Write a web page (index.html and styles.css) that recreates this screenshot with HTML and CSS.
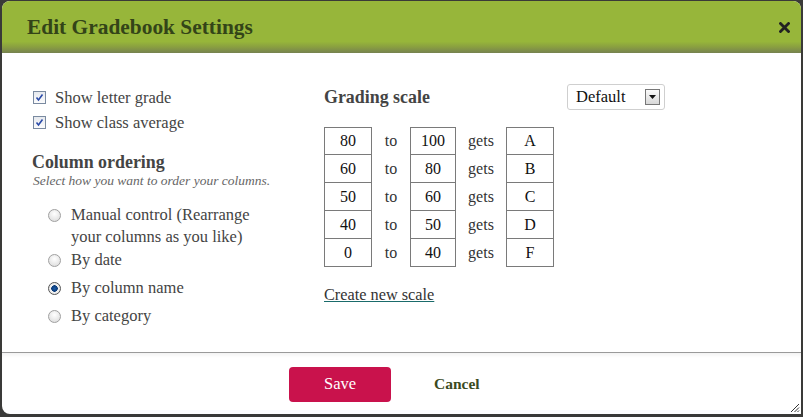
FILE: index.html
```html
<!DOCTYPE html>
<html>
<head>
<meta charset="utf-8">
<link rel="stylesheet" href="styles.css">
</head>
<body>
<div class="dialog">
  <div class="header">
    <h1 class="title">Edit Gradebook Settings</h1>
    <svg class="close" width="11" height="11" viewBox="0 0 11 11"><path d="M1.5 1.5 L9.5 9.5 M9.5 1.5 L1.5 9.5" stroke="#222" stroke-width="2.8" stroke-linecap="square"/></svg>
  </div>
  <div class="content">
    <div class="left">
      <div class="check-row"><span class="checkbox"><svg width="9" height="9" viewBox="0 0 9 9"><path d="M1.5 4.5 L3.5 7 L7.5 1.5" fill="none" stroke="#2a4aa8" stroke-width="1.6"/></svg></span><span>Show letter grade</span></div>
      <div class="check-row"><span class="checkbox"><svg width="9" height="9" viewBox="0 0 9 9"><path d="M1.5 4.5 L3.5 7 L7.5 1.5" fill="none" stroke="#2a4aa8" stroke-width="1.6"/></svg></span><span>Show class average</span></div>
      <h2 class="section-title">Column ordering</h2>
      <p class="hint">Select how you want to order your columns.</p>
      <div class="radio-list">
        <div class="radio-row first"><span class="radio"></span><span class="radio-label">Manual control (Rearrange<br>your columns as you like)</span></div>
        <div class="radio-row"><span class="radio"></span><span class="radio-label">By date</span></div>
        <div class="radio-row"><span class="radio selected"></span><span class="radio-label">By column name</span></div>
        <div class="radio-row"><span class="radio"></span><span class="radio-label">By category</span></div>
      </div>
    </div>
    <div class="right">
      <div class="scale-head">
        <h2 class="section-title">Grading scale</h2>
        <div class="select"><span>Default</span><span class="select-btn"><svg width="7" height="4" viewBox="0 0 7 4"><path d="M0 0 H7 L3.5 4 Z" fill="#111"/></svg></span></div>
      </div>
      <div class="scale">
        <div class="cell box">80</div><div class="cell">to</div><div class="cell box">100</div><div class="cell">gets</div><div class="cell box">A</div>
        <div class="cell box">60</div><div class="cell">to</div><div class="cell box">80</div><div class="cell">gets</div><div class="cell box">B</div>
        <div class="cell box">50</div><div class="cell">to</div><div class="cell box">60</div><div class="cell">gets</div><div class="cell box">C</div>
        <div class="cell box">40</div><div class="cell">to</div><div class="cell box">50</div><div class="cell">gets</div><div class="cell box">D</div>
        <div class="cell box">0</div><div class="cell">to</div><div class="cell box">40</div><div class="cell">gets</div><div class="cell box">F</div>
      </div>
      <a class="new-scale" href="#">Create new scale</a>
    </div>
  </div>
  <div class="footer">
    <button class="save">Save</button>
    <button class="cancel">Cancel</button>
  </div>
  <svg class="resize" width="12" height="12" viewBox="0 0 12 12"><path d="M11 3 L3 11 M11 6.5 L6.5 11 M11 9.5 L9.5 11" stroke="#333" stroke-width="1"/></svg>
</div>
</body>
</html>
```
FILE: styles.css
```css
html, body {
  margin: 0;
  padding: 0;
  height: 100%;
}
body {
  background: #3a3a38;
  font-family: "Liberation Serif", "Times New Roman", serif;
  color: #444;
  font-size: 16.5px;
  overflow: hidden;
}
.dialog {
  position: relative;
  margin: 1px 0 0 2px;
  width: 799px;
  height: 413px;
  background: #fff;
  border-radius: 8px 8px 0 8px;
  overflow: hidden;
  display: flex;
  flex-direction: column;
}
.header {
  height: 52px;
  flex: none;
  background: linear-gradient(#97b63a 0, #97b63a 78%, #8aa040 88%, #768250 100%);
  display: flex;
  align-items: center;
  justify-content: space-between;
  padding: 0 11px 0 25px;
}
.title {
  margin: 0;
  font-size: 21.4px;
  font-weight: bold;
  color: #334418;
}
.close {
  display: block;
}
.content {
  flex: 1;
  display: flex;
  padding: 32px 0 0 30px;
}
.left {
  width: 292px;
}
.check-row {
  display: flex;
  align-items: center;
  height: 25px;
  color: #444;
}
.checkbox {
  width: 11px;
  height: 11px;
  border: 1px solid #7a8aa0;
  background: linear-gradient(#e6e9ee, #fbfbfc);
  margin: 0 9px 0 1px;
  display: flex;
  align-items: center;
  justify-content: center;
  flex: none;
}
.checkbox svg { display: block; }
.section-title {
  margin: 0;
  font-size: 17.9px;
  font-weight: bold;
  color: #444;
}
.left .section-title {
  margin-top: 17px;
}
.hint {
  margin: 0 0 0 1px;
  font-size: 13.5px;
  font-style: italic;
  color: #666;
}
.radio-list {
  margin-top: 15px;
  padding-left: 16px;
}
.radio-row {
  display: flex;
  align-items: flex-start;
  line-height: 22px;
  margin-bottom: 6px;
}
.radio-row.first {
  margin-bottom: 1px;
}
.radio {
  width: 11px;
  height: 11px;
  border-radius: 50%;
  border: 1px solid #a0a0a0;
  background: radial-gradient(circle at 50% 35%, #fff, #d8d8d8);
  margin: 5px 10px 0 0;
  flex: none;
}
.radio.selected {
  border-color: #555;
  background: radial-gradient(circle at 50% 50%, #1a5aa8 0, #0a3a78 3px, #f2f2f2 3.5px, #dcdcdc 100%);
}
.scale-head {
  display: flex;
  align-items: center;
  width: 341px;
  justify-content: space-between;
  margin-top: -1px;
}
.select {
  border: 1px solid #cfcfcf;
  border-radius: 3px;
  box-sizing: border-box;
  width: 98px;
  height: 26px;
  display: flex;
  align-items: center;
  justify-content: space-between;
  padding: 0 4px 0 8px;
  color: #111;
  font-size: 16.5px;
}
.select-btn {
  width: 15px;
  height: 16px;
  border: 1px solid #777;
  background: linear-gradient(#fafafa, #d8d8d8);
  display: flex;
  align-items: center;
  justify-content: center;
  box-sizing: border-box;
}
.select-btn svg { display: block; }
.scale {
  margin-top: 17px;
  display: grid;
  grid-template-columns: 48px 38px 46px 50px 48px;
  grid-auto-rows: 28px;
  width: 230px;
}
.cell {
  display: flex;
  align-items: center;
  justify-content: center;
  font-size: 16px;
  color: #333;
}
.box {
  border: 1px solid #7a7a7a;
  margin-top: -1px;
  color: #111;
}
.scale .box:nth-child(-n+5) { margin-top: 0; }
.new-scale {
  display: inline-block;
  margin-top: 18px;
  color: #333;
  font-size: 16.3px;
  text-decoration: underline;
  text-decoration-color: #1a6b6b;
}
.footer {
  height: 61px;
  flex: none;
  border-top: 1px solid #9a9a9a;
  box-shadow: inset 0 4px 4px -2px rgba(0,0,0,0.06);
  display: flex;
  align-items: center;
  padding-left: 287px;
}
.save {
  width: 102px;
  height: 35px;
  background: #c9124c;
  color: #fff;
  border: none;
  border-radius: 4px;
  font-family: inherit;
  font-size: 16.5px;
  margin-top: 1px;
}
.cancel {
  background: none;
  border: none;
  font-family: inherit;
  font-size: 15.5px;
  font-weight: bold;
  color: #3b4a22;
  margin-left: 37px;
  padding: 0 6px;
}
.resize {
  position: absolute;
  right: 1px;
  bottom: 1px;
}
```
